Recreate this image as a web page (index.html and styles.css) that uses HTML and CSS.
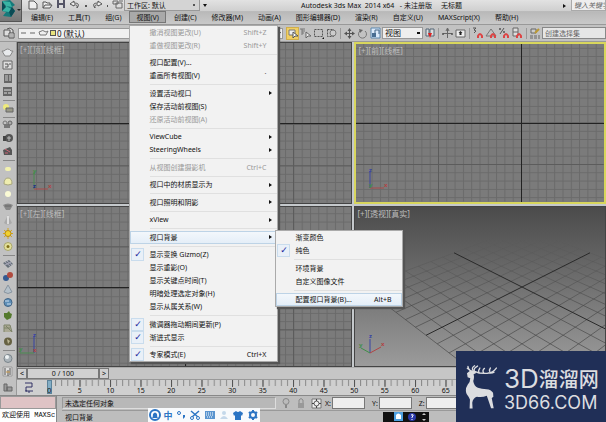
FILE: index.html
```html
<!DOCTYPE html>
<html lang="zh-CN">
<head>
<meta charset="utf-8">
<title>Autodesk 3ds Max 2014 x64</title>
<link rel="stylesheet" href="styles.css">
</head>
<body>
<div class="app">
<header class="header">
  <button class="app-button" aria-label="应用程序菜单">
    <svg width="22" height="22" viewBox="0 0 22 22"><path d="M2 1l8-1 5 5-3 2 3 4-4 6-8-1 3-4-4-1 4-4z" fill="#15797a"/><path d="M2 1l8 1 2 5-6-1zM6 6l9 5-6 1-7-1z" fill="#39b3a4"/><path d="M12 7l3 4-4 6-2-5zM2 1l4 6-4 4z" fill="#0b4b55"/><path d="M17 9h4l-2 2z" fill="#222"/></svg>
  </button>
  <div class="header-rows">
    <div class="title-row">
      <div class="quick">
        <button aria-label="新建"><svg width="12" height="11" viewBox="0 0 12 11"><path d="M2 1h5l3 3v5H2z" fill="#eee" stroke="#555"/></svg></button>
        <button aria-label="打开"><svg width="12" height="11" viewBox="0 0 12 11"><path d="M2 8V2h3l1 1h3v2M2 8l2-3h7L9 8z" fill="#eee" stroke="#555"/></svg></button>
        <button aria-label="保存"><svg width="12" height="11" viewBox="0 0 12 11"><path d="M2 0h8v8H2z" fill="#556"/><path d="M4 0h4v3H4zM4 5h4v3H4z" fill="#ddd"/></svg></button>
        <button aria-label="撤消"><svg width="12" height="11" viewBox="0 0 12 11"><path d="M5 1L1 4l4 2V5q4-1 3 3 4-5-3-5z" fill="#eee" stroke="#555"/></svg></button>
        <i class="dot"></i>
        <button aria-label="重做"><svg width="12" height="11" viewBox="0 0 12 11"><path d="M7 1l4 3-4 2V5Q3 4 4 8 0 3 7 3z" fill="#eee" stroke="#555"/></svg></button>
        <i class="dot"></i>
        <button aria-label="项目"><svg width="12" height="11" viewBox="0 0 12 11"><path d="M1 1h5v3H1zM4 3h6v5H4z" fill="#ddd" stroke="#666"/><path d="M7 1h4" stroke="#666"/></svg></button>
      </div>
      <button class="workspace"><span>工作区: 默认</span><i class="dot"></i></button>
      <i class="caret"></i>
      <h1 class="title">Autodesk 3ds Max&nbsp; 2014 x64 &nbsp; - 未注册版 &nbsp; &nbsp; 无标题</h1>
      <i class="caret right"></i>
      <input class="search" type="text" aria-label="搜索" placeholder="键入关键字或短语">
    </div>
    <nav class="menubar">
      <button>编辑(E)</button><button>工具(T)</button><button>组(G)</button>
      <div class="menu-host">
        <button class="open">视图(V)</button>
        <div class="menu main-menu" role="menu">
          <button class="off" role="menuitem">撤消视图更改(U)<kbd>Shift+Z</kbd></button>
          <button class="off" role="menuitem">重做视图更改(R)<kbd>Shift+Y</kbd></button>
          <hr>
          <button role="menuitem">视口配置(V)...</button>
          <button role="menuitem">重画所有视图(V)<kbd>`</kbd></button>
          <hr>
          <button class="more" role="menuitem">设置活动视口</button>
          <button role="menuitem">保存活动前视图(S)</button>
          <button class="off" role="menuitem">还原活动前视图(A)</button>
          <hr>
          <button class="more" role="menuitem">ViewCube</button>
          <button class="more" role="menuitem">SteeringWheels</button>
          <hr>
          <button class="off" role="menuitem">从视图创建摄影机<kbd>Ctrl+C</kbd></button>
          <hr>
          <button class="more" role="menuitem">视口中的材质显示为</button>
          <hr>
          <button class="more" role="menuitem">视口照明和阴影</button>
          <hr>
          <button class="more" role="menuitem">xView</button>
          <hr>
          <div class="menu-host">
            <button class="more hot" role="menuitem">视口背景</button>
            <div class="menu sub-menu" role="menu">
              <button role="menuitem">渐变颜色</button>
              <button class="checked" role="menuitemcheckbox" aria-checked="true">纯色</button>
              <hr>
              <button role="menuitem">环境背景</button>
              <button role="menuitem">自定义图像文件</button>
              <hr>
              <button class="hot" role="menuitem">配置视口背景(B)...<kbd>Alt+B</kbd></button>
            </div>
          </div>
          <hr>
          <button class="checked" role="menuitemcheckbox" aria-checked="true">显示变换 Gizmo(Z)</button>
          <button role="menuitem">显示重影(O)</button>
          <button role="menuitem">显示关键点时间(T)</button>
          <button role="menuitem">明暗处理选定对象(H)</button>
          <button role="menuitem">显示从属关系(W)</button>
          <hr>
          <button class="checked" role="menuitemcheckbox" aria-checked="true">微调器拖动期间更新(P)</button>
          <button class="checked" role="menuitemcheckbox" aria-checked="true">渐进式显示</button>
          <hr>
          <button class="checked" role="menuitemcheckbox" aria-checked="true">专家模式(E)<kbd>Ctrl+X</kbd></button>
        </div>
      </div>
      <button>创建(C)</button><button>修改器(M)</button><button>动画(A)</button><button>图形编辑器(D)</button><button>渲染(R)</button><button>自定义(U)</button><button>MAXScript(X)</button><button>帮助(H)</button>
    </nav>
  </div>
</header>

<div class="toolbar">
  <button class="tool layers" aria-label="层管理器"><svg width="13" height="13" viewBox="0 0 13 13"><path d="M1 3h6v6H1zM4 2l3-1 3 2v3" fill="#ddd" stroke="#555"/><path d="M6 6h5v5H6z" fill="#eee" stroke="#555"/><path d="M7 8h3M7 10h3" stroke="#777"/></svg></button>
  <button class="layer-select">
    <svg width="30" height="9" viewBox="0 0 30 9"><path d="M2 4h5M11 4h5" stroke="#666"/><path d="M20 3q4-3 7 0l2-1-2 4h-6z" fill="#eee" stroke="#777"/></svg>
    <i class="swatch"></i><span>0 (默认)</span><i class="caret"></i>
  </button>
  <button class="tool picked" aria-label="选择对象"><svg width="13" height="13" viewBox="0 0 13 13"><path d="M3 3h6v5H3z" fill="#eee" stroke="#777"/><path d="M7 5v6l2-2 3 0z" fill="#fff" stroke="#555"/></svg></button>
  <button class="tool" aria-label="按名称选择"><svg width="13" height="13" viewBox="0 0 13 13"><path d="M1 2h5M3 4h3M3 6h2M3 2v6" stroke="#777"/><path d="M7 5v6l2-2h3z" fill="#eee" stroke="#666"/></svg></button>
  <button class="tool" aria-label="矩形区域"><svg width="13" height="13" viewBox="0 0 13 13"><path d="M2.500 2.500h8v7h-8z" fill="none" stroke="#555" stroke-dasharray="2 1"/><path d="M12 12h-2l2-2z" fill="#111"/></svg></button>
  <button class="tool" aria-label="窗口交叉"><svg width="13" height="13" viewBox="0 0 13 13"><path d="M2.500 2.500h6v7h-6z" fill="none" stroke="#555" stroke-dasharray="2 1"/><circle cx="8" cy="6" r="3" fill="#ccc" stroke="#777"/></svg></button>
  <i class="rule"></i>
  <button class="tool" aria-label="移动"><svg width="13" height="13" viewBox="0 0 13 13"><path d="M3 6.500h7M6.500 3v7" stroke="#555"/><path d="M6.500 1l2 3h-4zM6.500 12l2-3h-4zM1 6.500l3-2v4zM12 6.500l-3-2v4z" fill="#555"/></svg></button>
  <button class="tool" aria-label="旋转"><svg width="13" height="13" viewBox="0 0 13 13"><path d="M4 4a4 4 0 1 0 5 0" fill="none" stroke="#777"/><path d="M3 2l4 1-3 3z" fill="#666"/></svg></button>
  <button class="tool" aria-label="缩放"><svg width="13" height="13" viewBox="0 0 13 13"><path d="M2 1h9v10H2z" fill="#dceafa" stroke="#5b86ae"/><path d="M3 6h4v4H3z" fill="#486d92"/><path d="M6 6V3h4v4" fill="none" stroke="#468"/></svg></button>
  <select class="coord" aria-label="参考坐标系"><option>视图</option></select>
  <button class="tool" aria-label="轴点"><svg width="13" height="13" viewBox="0 0 13 13"><path d="M3 2h3v7H3zM7 2h4v7H7z" fill="#ddd" stroke="#567"/><path d="M5 6h4l-2 5z" fill="#d22"/></svg></button>
  <i class="rule"></i>
  <button class="tool" aria-label="操纵"><svg width="13" height="13" viewBox="0 0 13 13"><path d="M6.500 2v9M2 6.500h9M5 4l1.500-3L8 4" stroke="#666" fill="none"/><circle cx="2" cy="7" r="1" fill="#555"/><circle cx="11" cy="7" r="1" fill="#555"/></svg></button>
  <button class="tool" aria-label="键盘快捷键"><svg width="13" height="13" viewBox="0 0 13 13"><path d="M2 3h9v7H2z" fill="#eee" stroke="#666"/><path d="M6.500 4l2 2h-1v2h-2V6h-1z" fill="#222"/></svg></button>
  <i class="rule"></i>
  <button class="tool" aria-label="捕捉"><svg width="13" height="13" viewBox="0 0 13 13"><path d="M1 1h3L2 3l2 1-2 2" stroke="#555" fill="none"/><path d="M6 11V9q2-4 4 0v2" fill="none" stroke="#d44" stroke-width="2"/></svg></button>
  <button class="tool" aria-label="角度捕捉"><svg width="13" height="13" viewBox="0 0 13 13"><path d="M1 9l5-7 5 7z" fill="none" stroke="#777"/><path d="M6 11V9q2-4 4 0v2" fill="none" stroke="#d44" stroke-width="2"/></svg></button>
  <button class="tool" aria-label="百分比捕捉"><svg width="13" height="13" viewBox="0 0 13 13"><path d="M6 1L2 7" stroke="#555"/><circle cx="2" cy="2" r="1" fill="#555"/><circle cx="6" cy="5" r="1" fill="#555"/><path d="M6 11V9q2-4 4 0v2" fill="none" stroke="#d44" stroke-width="2"/></svg></button>
  <button class="tool" aria-label="微调器捕捉"><svg width="13" height="13" viewBox="0 0 13 13"><path d="M2 1h5v8H2zM2 5h5" fill="#ddd" stroke="#666"/><path d="M6 11V9q2-4 4 0v2" fill="none" stroke="#d44" stroke-width="2"/></svg></button>
  <i class="rule"></i>
  <button class="tool" aria-label="编辑命名选择集"><svg width="13" height="13" viewBox="0 0 13 13"><path d="M2 2h5v4H2z" fill="#ccc" stroke="#666"/><path d="M6 6l4-4" stroke="#b93" stroke-width="2"/><path d="M1 9h3M5 9h3M9 9h2M1 11h3M5 11h3M9 11h2" stroke="#666"/></svg></button>
  <input class="set-name" type="text" aria-label="命名选择集" placeholder="创建选择集">
</div>

<main class="main">
  <aside class="side">
    <button aria-label="茶壶"><svg width="13" height="11" viewBox="0 0 13 11"><path d="M3 4q4-4 7 0l2 0-3 5H4L1 4z" fill="#e8eaec" stroke="#888"/></svg></button>
    <button aria-label="面板"><svg width="13" height="11" viewBox="0 0 13 11"><path d="M2 1h9v8H2z" fill="#ddd" stroke="#666"/><path d="M4 4h3v3H4M8 4h2" stroke="#555" fill="none"/></svg></button>
    <button aria-label="列表"><svg width="13" height="11" viewBox="0 0 13 11"><path d="M3 1h8v9H3z" fill="#666"/><path d="M4 3h3M4 5h3M4 7h3M8 3h2M8 5h2M8 7h2" stroke="#ccc"/></svg></button>
    <button aria-label="表格"><svg width="13" height="11" viewBox="0 0 13 11"><path d="M2 1h9v9H2z" fill="#666"/><path d="M3 4h7M3 7h3M7 7h3" stroke="#ddd"/></svg></button>
    <hr>
    <button aria-label="灯光列表"><svg width="13" height="11" viewBox="0 0 13 11"><circle cx="5" cy="4" r="3" fill="#eeea7c"/><path d="M5 5h7v4H5z" fill="#998" stroke="#666"/></svg></button>
    <hr>
    <button aria-label="摄影机"><svg width="13" height="11" viewBox="0 0 13 11"><path d="M3 4h6v4H3z" fill="#777"/><circle cx="4" cy="3" r="2" fill="none" stroke="#777"/><circle cx="9" cy="3" r="2" fill="#aaa" stroke="#666"/></svg></button>
    <button aria-label="胶片"><svg width="13" height="11" viewBox="0 0 13 11"><circle cx="8" cy="5" r="4" fill="#555"/><path d="M2 3h3v5H2z" fill="#444"/><path d="M8 3v5M6 5h4" stroke="#bbb"/></svg></button>
    <button aria-label="场记"><svg width="13" height="11" viewBox="0 0 13 11"><path d="M2 4l7-3 2 3v5H3z" fill="#555"/><path d="M4 3l5 3M4 7h3" stroke="#c67"/></svg></button>
    <hr>
    <button aria-label="平面光"><svg width="13" height="11" viewBox="0 0 13 11"><rect x="4" y="4" width="6" height="4" rx="2" fill="#f3f2af"/></svg></button>
    <button aria-label="穹顶光"><svg width="13" height="11" viewBox="0 0 13 11"><path d="M3 8q0-6 4-6t4 6q-4 2-8 0z" fill="#efedaf" stroke="#a9a77d"/></svg></button>
    <button aria-label="球光"><svg width="13" height="11" viewBox="0 0 13 11"><circle cx="7" cy="5" r="3" fill="#fafad5"/></svg></button>
    <button aria-label="网格光"><svg width="13" height="11" viewBox="0 0 13 11"><path d="M2 3q5-3 10 0L9 8H5z" fill="#888"/><path d="M4 4h6" stroke="#666"/></svg></button>
    <button aria-label="聚光"><svg width="13" height="11" viewBox="0 0 13 11"><path d="M7 0l4 8q-4 3-8 0z" fill="#aaa"/><path d="M7 1v8" stroke="#ddd" stroke-width="2"/></svg></button>
    <button aria-label="太阳光"><svg width="13" height="11" viewBox="0 0 13 11"><path d="M7 0v11M2 5.500h10M3 2l8 7M11 2L3 9" stroke="#d4a71c"/><circle cx="7" cy="5.500" r="3" fill="#f1d12f" stroke="#b98b10"/></svg></button>
    <button aria-label="环境光"><svg width="13" height="11" viewBox="0 0 13 11"><ellipse cx="7" cy="5.500" rx="4" ry="4" fill="#e2df9a" stroke="#a9a66b"/><circle cx="7" cy="5.500" r="1.500" fill="#806f18"/></svg></button>
    <hr>
    <button aria-label="平面"><svg width="13" height="11" viewBox="0 0 13 11"><path d="M2 5l6-3 4 4-5 4z" fill="#667079"/><path d="M4 4l5 4M6 3l5 4M4 7l6-3" stroke="#aab"/></svg></button>
    <button aria-label="融球"><svg width="13" height="11" viewBox="0 0 13 11"><circle cx="5" cy="7" r="3" fill="#335a91"/><circle cx="9" cy="4" r="3" fill="#b04b3f"/></svg></button>
    <button aria-label="锥体"><svg width="13" height="11" viewBox="0 0 13 11"><path d="M7 1l4 7q-4 3-8 0z" fill="#b4c0c9" stroke="#8995a0"/></svg></button>
    <button aria-label="水体"><svg width="13" height="11" viewBox="0 0 13 11"><circle cx="7" cy="5.500" r="4" fill="#5e8fb8" stroke="#426586"/><path d="M4 4h4M6 7h4" stroke="#cde"/></svg></button>
    <button aria-label="植物"><svg width="13" height="11" viewBox="0 0 13 11"><path d="M3 3l3 0 2-2 1 2 2 1-1 4-4 2-3-3z" fill="#557a2e"/></svg></button>
    <button aria-label="毛发"><svg width="13" height="11" viewBox="0 0 13 11"><path d="M3 9V2h6l2 7M5 3l6 6M3 5h6" stroke="#7d8368" fill="#aaa994"/></svg></button>
    <button aria-label="岩石"><svg width="13" height="11" viewBox="0 0 13 11"><circle cx="7" cy="5.500" r="4" fill="#666142"/><path d="M6 3l3 2-2 3z" fill="#bbb593"/></svg></button>
    <hr>
    <button aria-label="材质球"><svg width="13" height="11" viewBox="0 0 13 11"><circle cx="7" cy="5.500" r="4" fill="#aab3b9" stroke="#7b858b"/><circle cx="6" cy="4" r="2" fill="#eef2f4"/></svg></button>
    <button aria-label="变换"><svg width="13" height="11" viewBox="0 0 13 11"><path d="M2 1h9v9H2z" fill="#ddd" stroke="#999"/><path d="M4 2v7M7 4v6M9 2v7" stroke="#555"/><path d="M5 6h4" stroke="#c94"/></svg></button>
    <button class="last" aria-label="脚本"><svg width="13" height="11" viewBox="0 0 13 11"><path d="M3 2h3v7H3zM6 5h5v4H6z" fill="#999" stroke="#666"/></svg></button>
  </aside>
  <div class="work">
    <div class="views">
      <section class="view"><svg class="scene">
        <defs>
          <pattern id="cell" width="8.300" height="8.300" patternUnits="userSpaceOnUse" x="1.500" y="6.300"><path d="M0 .5H8.300M.5 0V8.300" stroke="#6a6a6a" fill="none"/></pattern>
          <pattern id="block" width="83" height="41.500" patternUnits="userSpaceOnUse" x="26" y="39.300"><path d="M0 .5H83M.5 0V41.500" stroke="#5c5c5c" fill="none"/></pattern>
        </defs>
        <rect width="100%" height="100%" fill="url(#cell)"/><rect width="100%" height="100%" fill="url(#block)"/>
        <path d="M0 80.500h340M167.500 0v170" stroke="#222"/>
        <path d="M16 146v-17" stroke="#4a8c50"/><path d="M16 146h14" stroke="#a94a4a"/>
        <text x="15" y="130" fill="#3f8f48">y</text><text x="15" y="145" fill="#1d2b88">z</text><text x="30" y="145" fill="#b04444">x</text>
      </svg><span class="label">[+][顶][线框]</span></section>
      <section class="view active"><svg class="scene">
        <defs>
          <pattern id="block2" width="83" height="41.500" patternUnits="userSpaceOnUse" x="82" y="37"><path d="M0 .5H83M.5 0V41.500" stroke="#5c5c5c" fill="none"/></pattern>
          <pattern id="cell2" width="8.300" height="8.300" patternUnits="userSpaceOnUse" x="7.300" y="3.800"><path d="M0 .5H8.300M.5 0V8.300" stroke="#6a6a6a" fill="none"/></pattern>
        </defs>
        <rect width="100%" height="100%" fill="url(#cell2)"/><rect width="100%" height="100%" fill="url(#block2)"/>
        <path d="M0 79.500h260M165.500 0v170" stroke="#222"/>
        <path d="M14 144v-17" stroke="#3944a4"/><path d="M14 144h14" stroke="#a94a4a"/>
        <text x="13" y="128" fill="#3944a4">z</text><text x="13" y="143" fill="#3f8f48">y</text><text x="28" y="143" fill="#b04444">x</text>
      </svg><span class="label">[+][前][线框]</span></section>
      <section class="view"><svg class="scene">
        <rect width="100%" height="100%" fill="url(#cell)"/><rect width="100%" height="100%" fill="url(#block)"/>
        <path d="M0 80.500h340M167.500 0v170" stroke="#222"/>
        <path d="M16 146v-17" stroke="#3944a4"/><path d="M16 146H2" stroke="#4a8c50"/>
        <text x="15" y="130" fill="#3944a4">z</text><text x="1" y="144" fill="#3f8f48">y</text><text x="15" y="145" fill="#b04444">x</text>
      </svg><span class="label">[+][左][线框]</span></section>
      <section class="view persp"><svg class="scene">
        <defs><linearGradient id="fade" gradientUnits="userSpaceOnUse" x1="0" y1="30" x2="0" y2="100"><stop offset="0" stop-color="#4a4a4a" stop-opacity="0"/><stop offset="1" stop-color="#4a4a4a" stop-opacity=".7"/></linearGradient></defs>
        <path id="floor" stroke="url(#fade)" fill="none"/>
        <path id="axes" stroke="#2a2a2a" fill="none"/>
        <path d="M15 146v-14" stroke="#3944a4"/><path d="M15 146l11-6" stroke="#b04444"/><path d="M15 146l-9-5" stroke="#3f8f48"/>
        <text x="14" y="131" fill="#3944a4">z</text><text x="26" y="139" fill="#b04444">x</text><text x="4" y="140" fill="#3f8f48">y</text>
      </svg><span class="label">[+][透视][真实]</span></section>
    </div>
    <div class="slider">
      <button class="step" aria-label="上一帧">&lt;</button><button class="thumb">0 / 100</button><button class="step" aria-label="下一帧">&gt;</button>
    </div>
    <div class="track">
      <svg class="curve" width="10" height="12" viewBox="0 0 10 12"><path d="M1 1h7v4H2v4h7M1 9l2 0M5 9v2" fill="none" stroke="#336"/></svg>
      <i class="key"></i>
      <svg class="ticks"><defs><pattern id="tick" width="6.100" height="8" patternUnits="userSpaceOnUse" x="2"><path d="M.5 0v6" stroke="#888"/></pattern><pattern id="tick5" width="30.500" height="8" patternUnits="userSpaceOnUse" x="2"><path d="M.5 0v8" stroke="#555"/></pattern></defs><rect width="100%" height="8" fill="url(#tick)"/><rect width="100%" height="8" fill="url(#tick5)"/></svg>
      <div class="frames"><span>0</span><span>5</span><span>10</span><span>15</span><span>20</span><span>25</span><span>30</span><span>35</span><span>40</span><span>45</span><span>50</span><span>55</span><span>60</span><span>65</span></div>
    </div>
  </div>
</main>

<footer class="status">
  <div class="listener"><div class="pink"></div><div class="welcome">欢迎使用 MAXSc</div></div>
  <div class="prompt">
    <div class="prompt-row">
      <div class="field">未选定任何对象</div>
      <button class="tool" aria-label="孤立"><svg width="13" height="13" viewBox="0 0 13 13"><circle cx="6" cy="4.500" r="3" fill="#bbb" stroke="#888"/><path d="M5 8h2v3H5z" fill="#888"/></svg></button>
      <button class="tool" aria-label="锁定"><svg width="13" height="13" viewBox="0 0 13 13"><path d="M4 6V3q2-3 4 0v3" fill="none" stroke="#888"/><path d="M3 6h6v5H3z" fill="#999"/></svg></button>
      <button class="tool" aria-label="绝对模式"><svg width="13" height="13" viewBox="0 0 13 13"><path d="M2 2h9v9H2z" fill="#eee" stroke="#777"/><circle cx="6.500" cy="6.500" r="2.500" fill="none" stroke="#555"/><path d="M6.500 2v2M6.500 9v2M2 6.500h2M9 6.500h2" stroke="#444"/></svg></button>
      <label>X:<input type="text"></label><label>Y:<input type="text"></label><label>Z:<input type="text"></label>
    </div>
    <div class="prompt-row second">视口背景</div>
  </div>
</footer>
</div>

<div class="ime">
  <svg width="12" height="12" viewBox="0 0 12 12"><circle cx="6" cy="6" r="5" fill="#fff" stroke="#2c75c4" stroke-width="2"/><path d="M3 9q1-1 1-4 2-3 4 0 0 3 1 4z" fill="#2c75c4"/></svg>
  <span>中</span>
  <svg width="12" height="12" viewBox="0 0 12 12"><circle cx="4" cy="4" r="1.500" fill="none" stroke="#2c75c4"/><path d="M8 6h2v2l-2 2z" fill="#2c75c4"/></svg>
  <svg width="12" height="12" viewBox="0 0 12 12"><path d="M2 2l7 6M10 2L3 8" stroke="#2c75c4" stroke-width="1.500"/><circle cx="3" cy="9" r="1.500" fill="#fff" stroke="#2c75c4"/><circle cx="9" cy="9" r="1.500" fill="#fff" stroke="#2c75c4"/></svg>
  <svg width="12" height="12" viewBox="0 0 12 12"><rect x="1" y="2" width="10" height="8" fill="#5b95cf"/><path d="M2 4h8M2 6h8M3 8h6" stroke="#fff" stroke-dasharray="1 1"/></svg>
  <svg width="12" height="12" viewBox="0 0 12 12"><circle cx="6" cy="4" r="2" fill="#c5d8ea"/><path d="M2 10q4-6 8 0z" fill="#c5d8ea"/></svg>
  <svg width="12" height="12" viewBox="0 0 12 12"><path d="M4 2q2 2 4 0l3 2-1 3-1-1v5H3V6L2 7 1 4z" fill="#2c75c4"/></svg>
  <svg width="12" height="12" viewBox="0 0 12 12"><circle cx="6" cy="6" r="3" fill="none" stroke="#2c75c4" stroke-width="2"/><path d="M6 1v2M6 9v2M2 3l1 1M9 8l1 1M10 3L9 4M3 8L2 9" stroke="#2c75c4" stroke-width="2"/></svg>
</div>
<div class="tray">
  <svg width="46" height="10" viewBox="0 0 46 10"><rect x="11" y="0" width="9" height="9" fill="#4ea0e0"/><path d="M13 7V3q2-3 5 0v4z" fill="#fff"/><circle cx="29" cy="5" r="4" fill="#2938a8"/><path d="M28 3q3-1 2 1l-1 1v1M29 7v1" stroke="#fff" fill="none"/><path d="M39 3h4l-2-2zM39 7h4l-2 2z" fill="#ccc"/></svg>
</div>
<div class="brand">
  <svg class="deer" width="33" height="46" viewBox="75 101 100 139"><g fill="none" stroke="#dcdde0" stroke-width="4" stroke-linecap="round"><path d="M94 122Q84 118 84 108M88 117L82 114M99 120Q94 112 104 106M103 121q-2-8 10-14M104 123q16 8 38 6 18-2 28-16M118 127q-4-6 2-14M132 128q-6-8 2-14M145 128q12 2 18-2M150 124q-2-6 2-11"/></g><path d="M81 129l11-9 14 3 3 5-8 4q3 10-1 20 2 15 14 21 12 4 26 4 14 1 20 11l1 12-5 4 6 31h-8l-9-27-4-11q-14 6-30 3-12 4-14 18l1 18h-9l1-28q-4-8-10-16-6-14 3-28 8-8 8-20l-8-3z" fill="#dcdde0"/></svg>
  <div class="brand-text">
    <div class="brand-name"><span>3D</span>溜溜网</div>
    <div class="brand-url">3D66.COM</div>
  </div>
</div>
<script src="scene.js"></script>
</body>
</html>
```
FILE: styles.css
```css
* { box-sizing: border-box; }
body {
  margin: 0;
  font: 7px/13px "Noto Sans", "Noto Sans CJK SC", sans-serif;
  color: #111;
  background: #c4c4c4;
  overflow: hidden;
}
button, input, select { font: inherit; color: inherit; margin: 0; padding: 0; border: 0; background: none; }
button { display: flex; align-items: center; white-space: nowrap; }
svg { display: block; flex: none; }
.app { display: flex; flex-direction: column; height: 100vh; }

.header { display: flex; background: linear-gradient(#dedede, #b9b9b9 12px, #c9c9c9); border-bottom: 1px solid #999; }
.app-button { width: 22px; height: 22px; background: linear-gradient(#999, #777); border: 1px solid #555; border-width: 0 1px 1px 0; }
.header-rows { flex: 1; min-width: 0; }
.title-row { display: flex; height: 11px; align-items: center; background: linear-gradient(#e2e2e2, #cfcfcf); }
.quick { display: flex; align-items: center; gap: 2px; padding-left: 5px; width: 102px; }
.dot { width: 2px; height: 2px; margin: 0 2px; background: #555; }
.workspace { width: 76px; height: 11px; padding: 0 2px; justify-content: space-between; border: 1px solid #999; border-top: 0; background: #d4d4d4; line-height: 9px; }
.caret { border: 2px solid transparent; border-top: 3px solid #111; border-bottom: 0; margin-left: 3px; }
.caret.right { border: 2px solid transparent; border-left: 3px solid #111; border-right: 0; margin: 0 5px 0 auto; }
.title { margin: 0 0 0 94px; font-size: 7px; font-weight: 400; white-space: nowrap; }
.search { width: 35px; height: 11px; padding-left: 2px; background: #eee; border: 1px solid #aaa; border-top: 0; font-style: italic; }
input::placeholder { color: #666; opacity: 1; }

.menubar { display: flex; gap: 1px; height: 13px; padding-left: 2px; }
.menubar > button { padding: 0 7px; }
.menu-host { position: relative; }
.open { height: 12px; padding: 0 7px; background: #a9a9a9; outline: 1px solid #777; outline-offset: -1px; }

.menu { position: absolute; z-index: 5; display: flex; flex-direction: column; padding: 0; background: #f2f2f2; border: 1px solid #aaa; box-shadow: 2px 2px 1px #555; }
.main-menu { top: 14px; left: 0; width: 149px; height: 337px; }
.sub-menu { top: -1px; left: 145px; width: 128px; height: 77px; }
.menu button { position: relative; width: 100%; height: 13px; padding: 0 11px 0 19px; }
.menu hr { flex: 1; width: 127px; margin: 0 0 0 auto; border: 0; background: linear-gradient(#e0e0e0, #e0e0e0) 0 2px / 100% 1px no-repeat; }
.menu .sub-menu hr { width: 108px; }
.menu .off { color: #999; }
.menu kbd { margin-left: auto; font: inherit; }
.menu .more::after { content: ""; margin-left: auto; margin-right: -6px; border: 2px solid transparent; border-left: 3px solid #111; border-right: 0; }
.menu .hot { background: linear-gradient(#f4f8fc, #e3edf7); outline: 1px solid #bdd3e6; outline-offset: -1px; }
.menu .checked::before { content: "✓"; position: absolute; left: 1px; top: 0; width: 13px; height: 13px; background: #e9f0f8; outline: 1px solid #c9dced; outline-offset: -1px; color: #22229a; font: 700 9px/13px "DejaVu Sans", sans-serif; text-align: center; }

.toolbar { display: flex; align-items: center; height: 17px; background: #c2c2c2; border-bottom: 1px solid #999; }
.tool { width: 13px; height: 13px; flex: none; }
.layers { margin: 0 2px 0 3px; }
.picked { background: #f1cf62; outline: 1px solid #d0ae4c; outline-offset: -1px; }
.layer-select { width: 265px; height: 11px; margin-right: 3px; background: #f0f0f0; border: 1px solid #999; font-size: 8px; line-height: 9px; }
.layer-select .caret { margin-left: auto; margin-right: 1px; }
.swatch { width: 6px; height: 6px; background: #e8e37c; border: 1px solid #555; margin: 0 1px; }
.rule { width: 1px; height: 11px; margin: 0 2px; background: #999; }
.coord { width: 41px; height: 12px; padding: 0 2px; appearance: none; font-size: 8px; line-height: 10px; color: #111; border: 1px solid #999; background: linear-gradient(#111, #111) 34px 4px / 3px 2px no-repeat #eee; }
.set-name { flex: 1; min-width: 0; height: 12px; padding-left: 2px; background: #e6e6e6; border: 1px solid #888; }

.main { flex: 1; min-height: 0; display: flex; }
.side { width: 17px; flex: none; padding-top: 4px; background: #c1c1c1; border-right: 1px solid #999; }
.side button { height: 13px; padding-left: 1px; }
.side hr { width: 12px; height: 1px; margin: 2px 0 1px 3px; border: 0; background: #888; }
.side .last { margin-top: 3px; }
.work { flex: 1; min-width: 0; display: flex; flex-direction: column; }
.views { flex: 1; min-height: 0; display: grid; grid-template-columns: 4fr 3fr; grid-template-rows: 1fr 1fr; gap: 2px; background: #c5c9cc; }
.view { position: relative; min-width: 0; overflow: hidden; background: #7b7b7b; border: 1px solid #444; }
.view.active { border: 2px solid #d8d65c; }
.persp { background: linear-gradient(#4b4b4b, #6d6d6d 45%, #9b9b9b); }
.scene { width: 100%; height: 100%; font-size: 6px; font-weight: 700; }
.label { position: absolute; top: 0; left: 2px; color: #bdbdbd; font-size: 8px; }

.slider { display: flex; height: 12px; background: #c6c6c6; border-top: 1px solid #aaa; }
.slider button { justify-content: center; height: 11px; line-height: 9px; background: #d0d0d0; border: 1px solid #777; }
.step { width: 10px; }
.thumb { width: 72px; }
.track { display: grid; grid-template-columns: 30px 1fr; grid-template-rows: 7px 8px; border-top: 1px solid #999; background: #cfcfcf; position: relative; }
.curve { grid-row: 1 / 3; margin: 2px 0 0 7px; }
.ticks { width: 100%; height: 7px; }
.key { position: absolute; left: 30px; top: 0; width: 5px; height: 14px; background: #83aec5; border: 1px solid #5b8299; }
.frames { display: grid; grid-template-columns: repeat(14, 1fr); width: 427px; margin-left: -13px; line-height: 8px; text-align: center; position: relative; }

.status { display: flex; height: 27px; border-top: 1px solid #888; background: #bdbdbd; }
.listener { width: 57px; margin-right: 5px; border-right: 1px solid #888; }
.pink { height: 13px; background: #dfc3c5; border: 1px solid #999; }
.welcome { height: 13px; padding-left: 2px; overflow: hidden; white-space: nowrap; background: #fff; font-family: "Liberation Mono", "Noto Sans CJK SC", monospace; }
.prompt { flex: 1; min-width: 0; }
.prompt-row { display: flex; align-items: center; height: 14px; }
.prompt-row .tool { margin-right: 2px; }
.field { width: 214px; height: 12px; padding-left: 2px; line-height: 11px; margin-right: 4px; border: 1px solid #999; border-right-color: #ddd; border-bottom-color: #ddd; background: #b8b8b8; }
.second { padding-left: 3px; border-top: 1px solid #999; }
.prompt-row label { display: flex; align-items: center; gap: 1px; margin-right: 7px; }
.prompt-row input { width: 33px; height: 12px; background: #eee; border: 1px solid #777; }

.ime { position: absolute; z-index: 6; left: 148px; bottom: 0; width: 112px; height: 14px; display: flex; align-items: center; justify-content: space-around; background: #f8fafc; color: #2c75c4; font-size: 9px; font-weight: 700; }
.tray { position: absolute; z-index: 6; left: 383px; bottom: 0; background: #111; }
.brand { position: absolute; z-index: 7; right: 0; bottom: 0; width: 150px; height: 71px; padding: 13px 0 0 9px; display: flex; gap: 6px; background: #202f57; color: #dcdde0; }
.brand-name { display: flex; align-items: center; height: 30px; font: 500 20px/30px "Noto Sans CJK SC", sans-serif; white-space: nowrap; }
.brand-name span { font: 400 26px/30px Inter, sans-serif; }
.brand-url { font: 400 18px/18px Inter, sans-serif; }
```
FILE: scene.js
```js
// Perspective ground plane: 14 x 14 cells seen from above a corner.
const origin = { x: 167, y: 80 };
function project(u, v) {
  const z = 1 + 0.171 * (u + v);
  return (origin.x + 79.6 * (u - v) / z).toFixed(1) + " " + (origin.y - 234 + 234 / z).toFixed(1);
}
function line(a, b, c, d) {
  return "M" + project(a, b) + "L" + project(c, d);
}
let floor = "";
for (let i = -7; i <= 7; i++) {
  const k = i / 7;
  if (i !== 0) floor += line(k, -1, k, 1) + line(-1, k, 1, k);
}
document.getElementById("floor").setAttribute("d", floor);
document.getElementById("axes").setAttribute("d", line(0, -1, 0, 1) + line(-1, 0, 1, 0));
```
